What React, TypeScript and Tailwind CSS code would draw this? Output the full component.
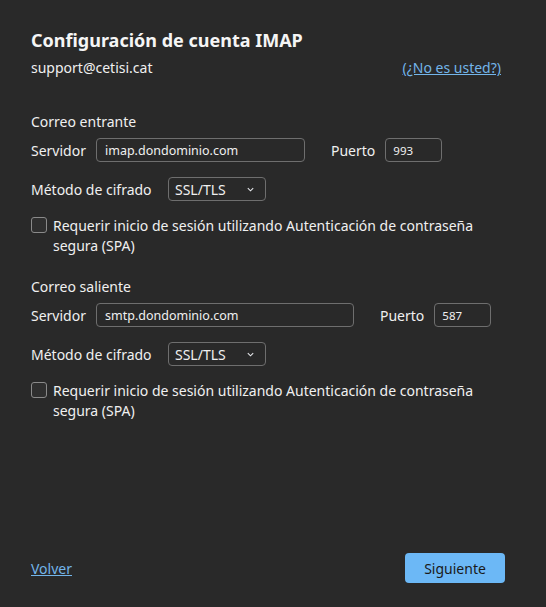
import React, { useState } from "react";

const font = { fontFamily: '"Noto Sans", "Open Sans", sans-serif' };

const Chevron = () => (
  <svg width="9" height="9" viewBox="0 0 10 10" className="text-gray-200">
    <path d="M2 3.5 L5 6.5 L8 3.5" fill="none" stroke="currentColor" strokeWidth="1.2" />
  </svg>
);

interface SectionProps {
  title: string;
  server: string;
  port: string;
  serverWidth: string;
}

const ServerSection: React.FC<SectionProps> = ({ title, server, port, serverWidth }) => {
  const [checked, setChecked] = useState(false);
  return (
    <div className="flex flex-col">
      <div className="text-[14px] leading-5 text-[#f0f0f0]">{title}</div>
      <div className="flex items-center mt-[6px] h-[24px]">
        <span className="text-[14px] text-[#f0f0f0] w-[65px]">Servidor</span>
        <input
          defaultValue={server}
          className={`${serverWidth} h-[24px] rounded-[4px] border border-[#6e6e6e] bg-transparent px-[8px] text-[12.5px] text-[#f0f0f0] outline-none`}
        />
        <span className="text-[14px] text-[#f0f0f0] ml-[26px]">Puerto</span>
        <input
          defaultValue={port}
          className="w-[57px] h-[24px] ml-[10px] rounded-[4px] border border-[#6e6e6e] bg-transparent px-[7px] text-[11.5px] text-[#f0f0f0] outline-none"
        />
      </div>
      <div className="flex items-center mt-[15px] h-[24px]">
        <span className="text-[14px] text-[#f0f0f0] w-[137px]">Método de cifrado</span>
        <div className="w-[98px] h-[24px] rounded-[4px] border border-[#6e6e6e] flex items-center justify-between pl-[6px] pr-[10px]">
          <span className="text-[14px] text-[#f0f0f0]">SSL/TLS</span>
          <Chevron />
        </div>
      </div>
      <label className="flex items-start mt-[15px] cursor-pointer">
        <button
          onClick={() => setChecked(!checked)}
          className="w-[16px] h-[16px] mt-[1px] rounded-[3px] border border-[#8a8a8a] bg-[#2f2f2f] shrink-0"
        />
        <span className="ml-[6px] text-[14px] leading-[20px] text-[#f0f0f0]">
          Requerir inicio de sesión utilizando Autenticación de contraseña
          <br />
          segura (SPA)
        </span>
      </label>
    </div>
  );
};

export default function App() {
  return (
    <div style={font} className="w-[546px] h-[607px] bg-[#292929] flex flex-col px-[31px] pt-[28px] pb-[24px]">
      <h1 className="text-[18px] font-bold leading-6 text-[#f5f5f5]">Configuración de cuenta IMAP</h1>
      <div className="flex justify-between items-center mt-[5px] pr-[14px]">
        <span className="text-[14px] text-[#f0f0f0]">support@cetisi.cat</span>
        <a href="#" className="text-[14px] text-[#73b5ea] underline">(¿No es usted?)</a>
      </div>
      <div className="mt-[34px]">
        <ServerSection title="Correo entrante" server="imap.dondominio.com" port="993" serverWidth="w-[209px]" />
      </div>
      <div className="mt-[21px]">
        <ServerSection title="Correo saliente" server="smtp.dondominio.com" port="587" serverWidth="w-[258px]" />
      </div>
      <div className="mt-auto flex justify-between items-center pr-[10px]">
        <a href="#" className="text-[14px] text-[#73b5ea] underline">Volver</a>
        <button className="w-[100px] h-[30px] rounded-[4px] bg-[#6cb8f6] text-[14px] text-[#1a1a1a]">Siguiente</button>
      </div>
    </div>
  );
}
